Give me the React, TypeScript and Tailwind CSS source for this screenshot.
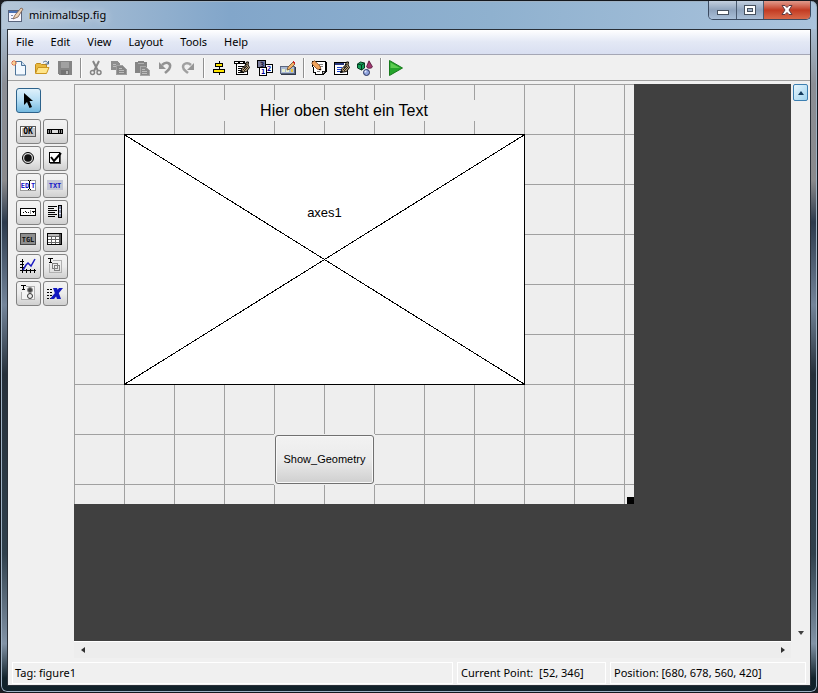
import type { ReactNode } from "react";

type IconProps = { children: ReactNode };

function Icon({ children }: IconProps) {
  return (
    <svg width="16" height="16" viewBox="0 0 16 16" fill="none" className="shrink-0" shapeRendering="crispEdges" aria-hidden="true">
      {children}
    </svg>
  );
}

/* Small caption inside a palette icon */
function Caption({ x, y, size, color, children }: { x: number; y: number; size: number; color: string; children: string }) {
  return (
    <text x={x} y={y} fontSize={size} fill={color} fontWeight="bold" textAnchor="middle" fontFamily="DejaVu Sans Mono, monospace">
      {children}
    </text>
  );
}

/* Hand holding a pencil, shared by the editor icons */
function Pencil() {
  return (
    <g shapeRendering="auto">
      <path d="M6.500 12.500l1.500-4 3-3 1.500-3.500h2l-.5 3 1.500 2.500-3 4-3 .5z" fill="#b9a27c" stroke="#000" />
      <path d="M10 8l3-4M9 10l4-4M10 11l4-4" stroke="#000" strokeWidth=".8" />
      <path d="M6 13l2-3 1 1.500z" fill="#000" />
    </g>
  );
}

const fileTools = [
  {
    name: "New Figure",
    icon: (
      <g shapeRendering="auto">
        <path d="M4.500 1.500h6l4 4v9.500h-10z" fill="#f3f9ff" stroke="#4c7398" />
        <path d="M10.500 1.500v4h4" fill="#cfe0f2" stroke="#4c7398" />
        <path d="M3 0v6M0 3h6M1 1l4 4M5 1l-4 4" stroke="#d9663c" />
        <circle cx="3" cy="3" r="1.500" fill="#ffd28a" />
      </g>
    ),
  },
  {
    name: "Open Figure",
    icon: (
      <g shapeRendering="auto">
        <path d="M1.500 13V4.500l1-1h4l1 1h5V8" fill="#e9b93e" stroke="#c08a1c" />
        <path d="M1.500 13.500L4 7.500h11l-2.500 6z" fill="#ffe58a" stroke="#cc9620" />
        <path d="M9 2.500c2-2 4-1.500 5 1M14.500 1v3h-3" stroke="#496b90" />
      </g>
    ),
  },
  {
    name: "Save Figure",
    icon: (
      <g>
        <path d="M1 1h14v14H2l-1-1z" fill="#858585" />
        <path d="M4 2h8v6H4z" fill="#a1a1a1" />
        <path d="M4 10h8v5H4z" fill="#737373" />
        <path d="M9 11h2v3H9z" fill="#b5b5b5" />
      </g>
    ),
  },
];

const editTools = [
  {
    name: "Cut",
    icon: (
      <g shapeRendering="auto" stroke="#858585">
        <path d="M5 1l5 10M11 1L6 11" strokeWidth="2" />
        <circle cx="4.500" cy="12.500" r="2" strokeWidth="1.500" />
        <circle cx="11" cy="12.500" r="2" strokeWidth="1.500" />
      </g>
    ),
  },
  {
    name: "Copy",
    icon: (
      <g>
        <path d="M0 1h6l3 3v6H0z" fill="#8e8e8e" />
        <path d="M2 4.500h3M2 6.500h3" stroke="#bcbcbc" />
        <path d="M5.500 5.500h6l4 4v5h-10z" fill="#858585" stroke="#a0a0a0" />
        <path d="M8 8.500h3M8 10.500h5M8 12.500h5" stroke="#bcbcbc" />
      </g>
    ),
  },
  {
    name: "Paste",
    icon: (
      <g>
        <path d="M1 2h3V1h6v1h3v11H1z" fill="#858585" />
        <path d="M4 3.500h6" stroke="#b0b0b0" />
        <path d="M6.500 6.500h5l4 4v5h-9z" fill="#8a8a8a" stroke="#a8a8a8" />
        <path d="M8 9.500h3M8 11.500h5M8 13.500h5" stroke="#bcbcbc" />
      </g>
    ),
  },
  {
    name: "Undo",
    icon: (
      <g shapeRendering="auto">
        <path d="M5 5c4-4 9-2 8 2-.5 3-3 4-5 6" stroke="#929292" strokeWidth="2.500" />
        <path d="M2 2v7h7z" fill="#929292" />
      </g>
    ),
  },
  {
    name: "Redo",
    icon: (
      <g shapeRendering="auto">
        <path d="M11 5C8 2 3 3 3 7c0 3 3 4 5 6" stroke="#a0a0a0" strokeWidth="2.500" />
        <path d="M14 3v7H7z" fill="#969696" />
      </g>
    ),
  },
];

const layoutTools = [
  {
    name: "Align Objects",
    icon: (
      <g>
        <rect x="4.500" y="3.500" width="7" height="3" fill="#ffe600" stroke="#000" />
        <rect x="2.500" y="9.500" width="11" height="3" fill="#ffe600" stroke="#000" />
        <path d="M8.500 1v3M8.500 7v3M8.500 13v2" stroke="#000" />
      </g>
    ),
  },
  {
    name: "Menu Editor",
    icon: (
      <g>
        <path d="M0 1h11v3H0z" fill="#000" />
        <path d="M2.500 3.500h11v11h-11z" fill="#fff" stroke="#000" />
        <path d="M1 2.500h3M6 2.500h3" stroke="#fff" />
        <path d="M4 6.500h6M4 8.500h4M4 10.500h5M4 12.500h6" stroke="#000" />
        <Pencil />
      </g>
    ),
  },
  {
    name: "Tab Order Editor",
    icon: (
      <g>
        <rect x=".5" y=".5" width="8" height="7" fill="#7b7d9e" stroke="#000" />
        <rect x="8.500" y="4.500" width="7" height="8" fill="#fff" stroke="#000" />
        <rect x="2.500" y="7.500" width="7" height="8" fill="#fff" stroke="#000" />
        <Caption x={5} y={7} size={7} color="#16163c">3</Caption>
        <Caption x={12} y={11} size={7} color="#0000a0">2</Caption>
        <Caption x={6} y={14} size={7} color="#0000a0">1</Caption>
      </g>
    ),
  },
  {
    name: "Toolbar Editor",
    icon: (
      <g>
        <rect x=".5" y="6.500" width="14" height="7" fill="#a9b9d4" stroke="#5b6780" />
        <path d="M1 14.500h15M15.500 7v8" stroke="#303848" />
        <path d="M2 9h3v3H2zM6 9h3v3H6z" fill="#e7efd0" />
        <path d="M11 9h2v3h-2z" fill="#e8c43a" />
        <path d="M7 10l1-3 5-5 2 2-5 5z" fill="#f0b068" stroke="#6b4a2a" strokeWidth=".8" shapeRendering="auto" />
        <path d="M12 2l1-1 2 2-1 1z" fill="#c22" />
      </g>
    ),
  },
];

const inspectTools = [
  {
    name: "Editor",
    icon: (
      <g>
        <path d="M1.500 1.500h13v10l-3 3h-7v-2h-2z" fill="#fff" stroke="#000" />
        <path d="M14 2h2v10h-1l-3 3H5v-1h6l3-3z" fill="#000" />
        <path d="M11 15v-4h4z" fill="#ddd" stroke="#000" strokeWidth=".8" />
        <path d="M8 4.500h4M9 6.500h3M6 11.500h3" stroke="#808080" />
        <path d="M1 2.500L3.500.8 9 6l1 4-4-1-5-5z" fill="#f0a35c" stroke="#7b4018" strokeWidth=".8" shapeRendering="auto" />
        <path d="M8.500 8.500L10 10l-2-.5z" fill="#000" />
      </g>
    ),
  },
  {
    name: "Property Inspector",
    icon: (
      <g>
        <rect x=".5" y="2.500" width="13" height="12" fill="#fff" stroke="#000" />
        <path d="M1 3h9v2H1z" fill="#26367c" />
        <path d="M3 7.500h5M3 9.500h4M3 11.500h7" stroke="#1740d0" />
        <Pencil />
      </g>
    ),
  },
  {
    name: "Object Browser",
    icon: (
      <g shapeRendering="auto">
        <path d="M.5 4l3-2 4 1v5l-3 2-4-2z" fill="#14a05a" stroke="#053a1e" />
        <path d="M.5 4l4 1 3-2M4.500 5v5" stroke="#053a1e" />
        <path d="M12 .8l3.500 6c-1 2-5 2-6 0z" fill="#a03870" stroke="#4d1235" strokeWidth=".8" />
        <circle cx="9.500" cy="12.500" r="3" fill="#8fa3dc" stroke="#26305c" />
        <circle cx="8.500" cy="11.500" r="1" fill="#e8eeff" />
      </g>
    ),
  },
];

const runTools = [
  {
    name: "Run Figure",
    icon: (
      <g shapeRendering="auto">
        <path d="M1.500.5L14.500 8l-13 7.500z" fill="#25a52b" stroke="#187a1c" />
        <path d="M2.500 2.500L12 8H2.500z" fill="#5ccc50" />
      </g>
    ),
  },
];

const toolGroups = [fileTools, editTools, layoutTools, inspectTools, runTools];

const palette = [
  {
    name: "Push Button",
    icon: (
      <g>
        <rect x=".5" y="3.500" width="15" height="10" fill="#c6c6c6" stroke="#5a5a5a" />
        <path d="M1 4.500h14M1.500 4v9" stroke="#fff" />
        <Caption x={8} y={11} size={8} color="#000">OK</Caption>
      </g>
    ),
  },
  {
    name: "Slider",
    icon: (
      <g>
        <rect x=".5" y="6.500" width="15" height="4" fill="#909090" stroke="#000" />
        <path d="M4.500 6v5M11.500 6v5M2.500 7v3M13.500 7v3" stroke="#000" />
        <path d="M5 7h6v3H5z" fill="#ddd" />
      </g>
    ),
  },
  {
    name: "Radio Button",
    icon: (
      <g shapeRendering="auto">
        <circle cx="8" cy="8" r="5.500" fill="#ddd" stroke="#000" />
        <circle cx="8" cy="8" r="3.800" fill="#111" />
      </g>
    ),
  },
  {
    name: "Check Box",
    icon: (
      <g>
        <rect x="2.500" y="2.500" width="10" height="10" fill="#fff" stroke="#000" />
        <path d="M13.500 3v11M3 13.500h11" stroke="#555" />
        <path d="M4 7l3 4 7-8" stroke="#000" strokeWidth="2" shapeRendering="auto" />
      </g>
    ),
  },
  {
    name: "Edit Text",
    icon: (
      <g>
        <rect x=".5" y="3.500" width="15" height="10" fill="#fff" stroke="#9a9a9a" />
        <Caption x={5} y={11} size={7} color="#1414c8">ED</Caption>
        <Caption x={13} y={11} size={7} color="#1414c8">T</Caption>
        <path d="M8 3.500h1M10 3.500h1M8 12.500h1M10 12.500h1M9.500 4v8" stroke="#000" />
      </g>
    ),
  },
  {
    name: "Static Text",
    icon: (
      <g>
        <rect x="0" y="3" width="16" height="10" fill="#c3c6d4" />
        <Caption x={8} y={11} size={7} color="#1414c8">TXT</Caption>
      </g>
    ),
  },
  {
    name: "Pop-up Menu",
    icon: (
      <g>
        <rect x=".5" y="4.500" width="15" height="7" rx="1" fill="#fff" stroke="#000" />
        <path d="M3 8.500h1M5 7.500h1M6 8.500h1M8 8.500h1" stroke="#000" />
        <path d="M10.500 6v4" stroke="#999" />
        <path d="M11 7h4l-2 2z" fill="#000" />
      </g>
    ),
  },
  {
    name: "Listbox",
    icon: (
      <g>
        <path d="M1 2.500h9M1 4.500h6M1 6.500h9M1 8.500h7M1 10.500h9M1 12.500h7" stroke="#000" />
        <rect x="11.500" y="1.500" width="3" height="12" fill="#8f96b0" stroke="#000" />
        <path d="M12 5.500h2M12 9.500h2" stroke="#dfe3f2" />
      </g>
    ),
  },
  {
    name: "Toggle Button",
    icon: (
      <g>
        <rect x=".5" y="2.500" width="15" height="11" fill="#8e8e8e" stroke="#444" />
        <Caption x={8} y={11} size={7} color="#111">TGL</Caption>
      </g>
    ),
  },
  {
    name: "Table",
    icon: (
      <g>
        <rect x=".5" y="2.500" width="14" height="11" fill="#fff" stroke="#000" />
        <path d="M1 5.500h13M1 8.500h13M1 11.500h13M4.500 3v10M8.500 3v10" stroke="#666" />
        <path d="M12 3h2v10h-2z" fill="#555" />
        <path d="M1 3h11v2H1z" fill="#bbb" />
      </g>
    ),
  },
  {
    name: "Axes",
    icon: (
      <g>
        <path d="M2.500 1v14M0 12.500h16M0 3.500h4M0 6.500h4M0 9.500h4M6.500 11v4M10.500 11v4M14.500 11v4" stroke="#000" />
        <path d="M3 12l3-5 2-2 3 3 4-7" stroke="#1a1ac0" strokeWidth="1.500" shapeRendering="auto" />
      </g>
    ),
  },
  {
    name: "Panel",
    icon: (
      <g>
        <path d="M6 2.500h8.500v12h-12V6" stroke="#b0b0b0" />
        <path d="M1 .5h5M3.500 0v5M2 4.500h3" stroke="#000" />
        <path d="M5.500 5.500h5v5h-5zM7.500 7.500h5v5h-5z" stroke="#808080" />
      </g>
    ),
  },
  {
    name: "Button Group",
    icon: (
      <g>
        <path d="M6 1.500h8.500v13H1.500V7" fill="#f4f4f4" stroke="#b0b0b0" />
        <path d="M1 .5h5M3.500 0v5M2 4.500h3" stroke="#000" />
        <g shapeRendering="auto">
          <circle cx="10" cy="5" r="2.500" fill="#444" stroke="#888" />
          <circle cx="10" cy="11" r="2.500" fill="#eee" stroke="#333" />
        </g>
      </g>
    ),
  },
  {
    name: "ActiveX Control",
    icon: (
      <g shapeRendering="auto">
        <path d="M0 4.500h6M0 7.500h6M0 10.500h5M0 13.500h4" stroke="#000" strokeDasharray="2 1" />
        <path d="M6 3h4l4 11h-4zM12 3h4L7 14H3z" fill="#1218c0" />
      </g>
    ),
  },
];

const menus = ["File", "Edit", "View", "Layout", "Tools", "Help"];

function TitleBar() {
  return (
    <header className="flex h-7 items-start justify-between pl-[7px]">
      <div className="flex items-center gap-[5px] pt-[6px]">
        <Icon>
          <rect x=".5" y="3.500" width="13" height="11" fill="#f6f6ff" stroke="#59647c" />
          <path d="M1 4h12v2H1z" fill="#4b72b4" />
          <path d="M3 8h2v1H3zM7 8h2v1H7zM3 11h2v1H3z" fill="#7e8aa8" />
          <path d="M5 12l2-4 6-7 2 1-5 8z" fill="#f0d4b8" stroke="#7a5a48" strokeWidth=".8" shapeRendering="auto" />
        </Icon>
        <h1 className="text-[11px] leading-4 text-black [text-shadow:0_0_8px_#ffffff]">minimalbsp.fig</h1>
      </div>
      <div className="mr-[6px] flex h-[19px] overflow-hidden rounded-b-[5px] border border-t-0 border-[#3b4a60]">
        <button aria-label="Minimize" className="flex w-7 items-center justify-center border-r border-[#4a5a70] bg-linear-to-b from-[#c3cfdf] via-[#8fa3bd] to-[#a9bfd8]">
          <span className="mt-[5px] h-[5px] w-3 border border-[#46505e] bg-white"></span>
        </button>
        <button aria-label="Maximize" className="flex w-[27px] items-center justify-center border-r border-[#4a5a70] bg-linear-to-b from-[#c3cfdf] via-[#8fa3bd] to-[#a9bfd8]">
          <span className="flex h-[10px] w-3 items-center justify-center border border-[#46505e] bg-white">
            <span className="h-1 w-[6px] border border-[#46505e] bg-[#9fb1c9]"></span>
          </span>
        </button>
        <button aria-label="Close" className="flex w-[46px] items-center justify-center bg-linear-to-b from-[#e09a8c] via-[#c23a22] to-[#d8694a]">
          <svg width="12" height="10" viewBox="0 0 12 10" aria-hidden="true">
            <path d="M1 .5h3l2 2 2-2h3L8 5l3 4.500H8l-2-2-2 2H1L4 5z" fill="#fff" stroke="#5b3b42" />
          </svg>
        </button>
      </div>
    </header>
  );
}

function MenuBar() {
  return (
    <nav className="flex h-[25px] items-center gap-[17px] border-b border-[#a5a7b5] bg-linear-to-b from-white via-[#e3e8f5] via-50% to-[#d9dff1] pl-2">
      {menus.map((menu) => (
        <button key={menu} className="text-[11px] leading-4 text-black">
          {menu}
        </button>
      ))}
    </nav>
  );
}

function ToolBar() {
  return (
    <div role="toolbar" className="flex h-[26px] items-center border-b border-[#a0a0a0] bg-[#f0f0f0]">
      {toolGroups.map((group, i) => (
        <div key={i} className="flex items-center">
          {i > 0 && <span className="mx-[3px] h-5 w-[2px] border-l border-[#909090] bg-white"></span>}
          {group.map((tool) => (
            <button key={tool.name} aria-label={tool.name} className="flex h-[22px] w-[23px] items-center pl-[3px]">
              <Icon>{tool.icon}</Icon>
            </button>
          ))}
        </div>
      ))}
    </div>
  );
}

function Palette() {
  return (
    <aside className="w-[66px] shrink-0 pt-1 pl-2">
      <button aria-label="Select" className="flex h-[25px] w-[25px] items-center justify-center rounded-[3px] border border-[#2c628b] bg-linear-to-b from-[#dff1fb] via-[#b4ddf4] to-[#74b9df]">
        <svg width="11" height="17" viewBox="0 0 11 17" aria-hidden="true">
          <path d="M1 1v12l3-3 2.500 6 2.500-1-2.500-6H10z" fill="#000" />
        </svg>
      </button>
      <div className="mt-[6px] grid w-[52px] grid-cols-2 gap-[2px]">
        {palette.map((item) => (
          <button
            key={item.name}
            aria-label={item.name}
            className="flex h-[25px] w-[25px] items-start rounded-[3px] border border-[#828282] bg-linear-to-b from-[#f3f3f3] via-[#ececec] to-[#d0d0d0] pt-[3px] pl-[3px]"
          >
            <Icon>{item.icon}</Icon>
          </button>
        ))}
      </div>
    </aside>
  );
}

/* The figure being designed, with its components at their own positions */
function Figure() {
  return (
    <div className="relative h-[420px] w-[560px] bg-[#eeeeee] bg-[linear-gradient(to_right,#a0a0a0_1px,transparent_1px),linear-gradient(to_bottom,#a0a0a0_1px,transparent_1px)] bg-[size:50px_50px] font-['Liberation_Sans',sans-serif] text-black">
      <p className="absolute top-4 left-[120px] h-[21px] w-[300px] bg-[#eeeeee] text-center text-base leading-[21px]">
        Hier oben steht ein Text
      </p>
      <div className="absolute top-[50px] left-[50px] h-[251px] w-[401px] border border-black bg-white">
        <svg className="h-full w-full" viewBox="0 0 399 249" preserveAspectRatio="none" shapeRendering="crispEdges" aria-hidden="true">
          <path d="M0 0l399 249M399 0L0 249" stroke="#000" />
        </svg>
        <span className="absolute inset-x-0 top-[70px] text-center text-[13px] leading-4">axes1</span>
      </div>
      <div className="absolute top-[350px] left-[200px] bg-[#eeeeee] p-px">
        <button className="h-[49px] w-[99px] rounded-[3px] border border-[#707070] bg-linear-to-b from-[#f2f2f2] from-0% via-[#ebebeb] via-50% to-[#cfcfcf] text-[11px] shadow-[inset_0_0_0_1px_#f8f8f8]">
          Show_Geometry
        </button>
      </div>
      <span className="absolute right-0 bottom-0 h-[7px] w-[7px] bg-black"></span>
    </div>
  );
}

function Workspace() {
  return (
    <main className="flex grow pt-[3px]">
      <Palette />
      <div className="flex grow flex-col">
        <div className="flex grow">
          <div className="grow bg-[#404040]">
            <Figure />
          </div>
          <div className="flex w-[19px] flex-col items-center justify-between">
            <button aria-label="Scroll up" className="flex h-[17px] w-[15px] items-center justify-center rounded-[2px] border border-[#3c7fb1] bg-linear-to-br from-[#e8f6fd] to-[#a0d4ef]">
              <span className="border-x-3 border-b-4 border-x-transparent border-b-[#123a5c]"></span>
            </button>
            <button aria-label="Scroll down" className="flex h-[17px] w-[15px] items-center justify-center">
              <span className="border-x-3 border-t-4 border-x-transparent border-t-[#404040]"></span>
            </button>
          </div>
        </div>
        <div className="mr-[19px] flex h-[17px] items-center justify-between border-t border-white bg-[#ededed]">
          <button aria-label="Scroll left" className="flex h-4 w-[17px] items-center justify-center">
            <span className="border-y-3 border-r-4 border-y-transparent border-r-[#303030]"></span>
          </button>
          <button aria-label="Scroll right" className="flex h-4 w-[17px] items-center justify-center">
            <span className="border-y-3 border-l-4 border-y-transparent border-l-[#303030]"></span>
          </button>
        </div>
      </div>
    </main>
  );
}

function StatusBar() {
  return (
    <footer className="mt-1 mr-1 mb-px ml-1 flex h-[22px] items-center gap-1 text-[11px] leading-5 text-black">
      <span className="grow border border-white pl-[2px]">Tag: figure1</span>
      <span className="w-[149px] border border-white pl-[3px] whitespace-pre">Current Point:  [52, 346]</span>
      <span className="w-[196px] border border-white pl-[3px]">Position: [680, 678, 560, 420]</span>
    </footer>
  );
}

export default function App() {
  return (
    <div className="min-h-screen bg-[#1b1d22] font-['Noto_Sans',sans-serif]">
      {/* Glass frame: title strip over the tinted side borders */}
      <div className="flex min-h-screen flex-col rounded-[7px] border border-[#14181e] bg-[linear-gradient(to_right,#b4c6d8,#82a6ca_28%,#8fb1cf_60%,#aac3dc),linear-gradient(to_bottom,#a9bdd2_28px,#8c8f96_12%,#8a8a8c_26%,#2c3a4c_32%,#74859a_44%,#26303a_54%,#30404c_80%,#8293a6_93%,#12222a_98%)] bg-[size:100%_28px,100%_100%] bg-no-repeat shadow-[inset_0_0_0_1px_#9fb2c4]">
        <TitleBar />
        <div className="mx-[6px] mb-[6px] flex grow flex-col border border-[#2a3038] bg-[#f0f0f0]">
          <MenuBar />
          <ToolBar />
          <Workspace />
          <StatusBar />
        </div>
      </div>
    </div>
  );
}
